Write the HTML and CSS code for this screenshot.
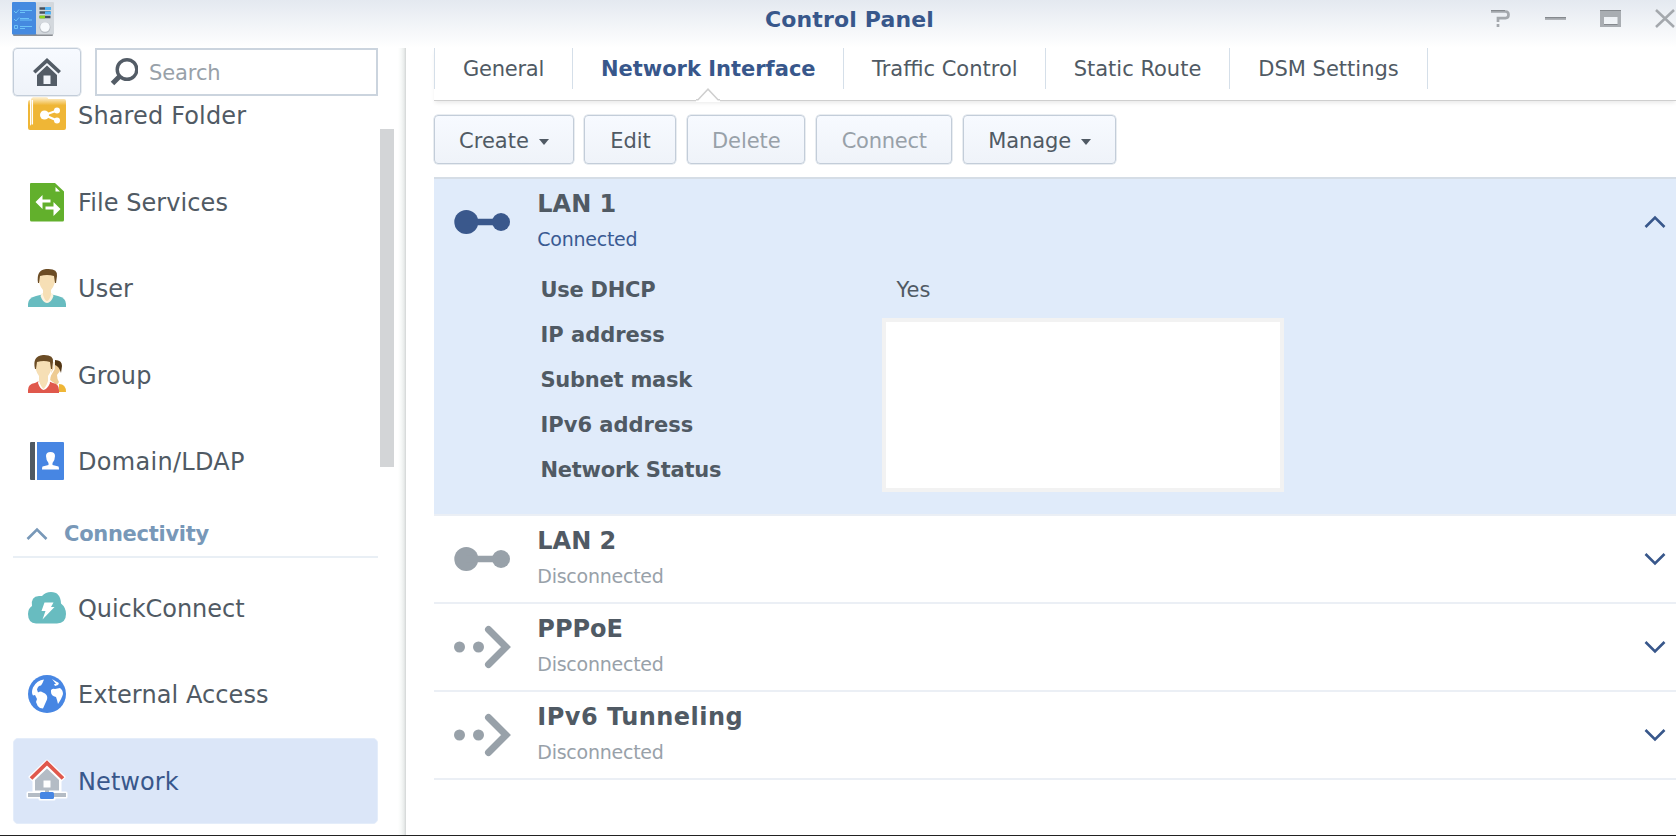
FILE: index.html
```html
<!DOCTYPE html>
<html lang="en">
<head>
<meta charset="utf-8">
<title>Control Panel</title>
<link rel="stylesheet" href="styles.css">
</head>
<body>
<div class="window">
  <header class="titlebar">
    <svg class="app-icon" width="42" height="36" viewBox="0 0 42 36">
      <rect x="1" y="31.500" width="40" height="2.400" rx="1" fill="#8b8e93"/>
      <rect x="0" y="0" width="24" height="32.500" rx="1" fill="#458ae0"/>
      <rect x="24" y="0" width="18" height="32.500" rx="1" fill="#d3d8dd"/>
      <path d="M2 9l2 2 3-3.500M2 17l2 2 3-3.500M2.500 23.500h3v3h-3z" fill="none" stroke="#6cc3f7"/>
      <path d="M8 8.500h12M8 10.500h5M8 16.500h9M8 18h12M8 24.500h12M8 26.500h5" stroke="#6cc3f7"/>
      <path d="M27.500 6.500h11M27.500 10.500h11M27.500 15h11" stroke="#46505c" stroke-width="2.600"/>
      <path d="M33 6.500h6M33 11h6" stroke="#4fb2f5" stroke-width="2.800"/>
      <path d="M27.500 15h5.500" stroke="#8ed61c" stroke-width="2.800"/>
      <circle cx="33" cy="25.500" r="5.500" fill="#b7bcc3"/>
      <circle cx="33" cy="25" r="4.800" fill="#f7fafc"/>
    </svg>
    <h1 class="title">Control Panel</h1>
    <svg class="controls" width="186" height="22" viewBox="0 0 186 22">
      <g fill="none" stroke="#a4a8ad" stroke-width="2.700">
        <path d="M1 3.500h14.500q3 0 3 3.300t-3 3.300h-7.500v3.900"/>
        <path d="M8 16v3"/>
        <path d="M55 10.500h21"/>
        <path d="M166 2l18 17M184 2l-18 17" stroke-width="2.500"/>
      </g>
      <path d="M110 2h21v17h-21zM114 9v7h13.500V9z" fill="#a9adb2" fill-rule="evenodd"/>
      <path d="M1 2.500h14M55 9.500h21M110 2.500h21M114 16.500h13.500" stroke="#85898e"/>
    </svg>
  </header>
  <div class="body">
    <aside class="sidebar">
      <div class="side-top">
        <button class="btn home">
          <svg width="28" height="28" viewBox="0 0 28 28" fill="#535c66">
            <path d="M14 0L0 13l2.500 2.500L14 5l11.500 10.500L28 13z"/>
            <path fill-rule="evenodd" d="M14 7.500L4 17v11h20V17zM10.500 17.500h7V26h-7z"/>
          </svg>
        </button>
        <div class="search">
          <svg width="28" height="28" viewBox="0 0 28 28" fill="none" stroke="#535c66">
            <circle cx="17" cy="11.500" r="9.800" stroke-width="3.400"/>
            <path d="M9.500 18.500L2.500 25.500" stroke-width="5"/>
          </svg>
          <span>Search</span>
        </div>
      </div>
      <div class="list">
        <nav class="items">
          <a class="item first"><svg class="ic" width="42" height="42" viewBox="0 0 42 42">
            <defs><linearGradient id="fade" x1="0" y1="0" x2="0" y2="1"><stop offset="0" stop-color="#fff3d8"/><stop offset=".25" stop-color="#efb636"/></linearGradient></defs>
            <path d="M2 8q0-2 2-2v24q0 1.500 1 1.500V6q0-2 2-3h13q2 0 2 1.500V5h16q2 0 2 2v27q0 2-2 2H4q-2 0-2-2z" fill="url(#fade)"/>
            <path d="M6.300 6v24.500" stroke="#fff" stroke-width="1.500"/>
            <path d="M31 16.500L18.500 21 31 26.500" fill="none" stroke="#fff" stroke-width="2.200"/>
            <circle cx="18.500" cy="21" r="4.500" fill="#fff"/><circle cx="31" cy="16.500" r="3" fill="#fff"/><circle cx="31" cy="26.500" r="3" fill="#fff"/>
          </svg>Shared Folder</a>
          <a class="item"><svg class="ic" width="42" height="42" viewBox="0 0 42 42">
            <path d="M5 2h24l9 8.500V39q0 1.500-1.500 1.500h-31Q4 40.500 4 39V3q0-1 1-1z" fill="#62b02c"/>
            <path d="M29.500 6v4.500H34zM9.500 21l7-7v4.500h8v3h-8V28zM34.500 28l-7-7v4.500h-8v3h8V35z" fill="#fff"/>
          </svg>File Services</a>
          <a class="item"><svg class="ic" width="42" height="42" viewBox="0 0 42 42">
            <path d="M2 40v-3q0-6 8-8l6-1.500h10L32 29q8 2 8 8v3z" fill="#68bcc0"/>
            <path d="M16 26l-1.500 3q2.500 7 6.500 7t6.500-7L26 26z" fill="#fdf3df"/>
            <path d="M12.500 9q0-6 8.500-6t8.500 6q0 9-4.500 14v5q-2 6-4 6t-4-6v-5Q12.500 18 12.500 9z" fill="#f6dfb5"/>
            <path d="M12 16q-2-13 8-14 12-1 11 7l-1 7h-1l-1-7q-7-2-14 0l-1 7z" fill="#6b4c25"/>
          </svg>User</a>
          <a class="item"><svg class="ic" width="42" height="42" viewBox="0 0 42 42">
            <path d="M33 39v-8q7 0 7 8z" fill="#efb636"/>
            <path d="M27 9h8q1 8-4 13 0 4 2 7l-2 3-7-5z" fill="#eecb93"/>
            <path d="M29 7q7 0 7 6l-1 7q-2-7-6-8z" fill="#523614"/>
            <path d="M2 40v-3q0-6 7-7l4-2h9l5 2q6 1 6 7v3z" fill="#e0584c"/>
            <path d="M13 26l-1 4q2 6 5.500 7 4-1 6.500-7l-1-4z" fill="#fff"/>
            <path d="M9 9q0-6 8.500-6T26 9q0 9-4 14v5q-2 6-4.500 8-2.500-2-4.500-8v-5Q9 18 9 9z" fill="#f6dfb5"/>
            <path d="M28 7v9L23.500 24v5" fill="none" stroke="#fff" stroke-width="1.300"/>
            <path d="M9 16Q6 3 17 2q11-.500 10 7l-1 7h-1l-1-7q-6-2-13 0l-1 7z" fill="#6b4c25"/>
          </svg>Group</a>
          <a class="item dom"><svg class="ic" width="42" height="42" viewBox="0 0 42 42">
            <path d="M5 2h4v38H5q-1 0-1-1V3q0-1 1-1z" fill="#4f5a64"/>
            <path d="M11 2h26q1 0 1 1v36q0 1-1 1H11z" fill="#4786e3"/>
            <path d="M20 16q0-4 4.500-4t4.500 4q0 4-2.500 7v2l6 1.500q.500 1 .500 3H16q0-2 .500-3l6-1.500v-2Q20 20 20 16z" fill="#fff"/>
          </svg>Domain/LDAP</a>
          <div class="group"><svg width="22" height="14" viewBox="0 0 22 14"><path d="M1.500 12L11 2.500 20.500 12" fill="none" stroke="#7898b8" stroke-width="2.600"/></svg>Connectivity</div>
          <a class="item quick"><svg class="ic" width="42" height="42" viewBox="0 0 42 42">
            <path d="M10 36.500q-8-.500-8-9.500 0-5.500 4-8Q4.500 9.500 13 9h3q3.500-4 9-4 9.500 0 10 11.500 5 4 5 10.500 0 9-9 9.500z" fill="#68bcc0"/>
            <path d="M18.500 15.500h9L25 20h3.500L16.500 32.500l3-8.500h-4z" fill="#fff"/>
          </svg>QuickConnect</a>
          <a class="item"><svg class="ic" width="42" height="42" viewBox="0 0 42 42">
            <circle cx="21" cy="21" r="19" fill="#4786e3"/>
            <path d="M18 6.500q-7 .500-11 8-2 5 0 8l2-.500 2 4-1 3q1 4 4 6l3 .500 4-9q1-4-2-6l-4-2q-2 0-3 1l-1-3q1-4 4-4 2-3 3-6zM25 17q2-2 4-1l5-1q3 2 3 6-1 4-5 10l-1-4-1-3q-5-1-5-5zM26 6l5 3q3 1 1 3l-3 1-1-2h2z" fill="#fff"/>
          </svg>External Access</a>
          <a class="item active"><svg class="ic" width="42" height="42" viewBox="0 0 42 42">
            <g stroke="#fff" stroke-width="3" stroke-linejoin="round" fill="#fff"><path d="M21 2L4 18l3 3 1-1v12h12v2H2v4h38v-4H22v-2h12V20l1 1 3-3z"/><path d="M14 33h14v7H14z"/></g>
            <path d="M21 9.500L9 21v10.500h24V21z" fill="#b4bcc5"/><path d="M17.500 21.500h7v7h-7z" fill="#fff"/>
            <path d="M5 19.500L21 4l16 15.500" fill="none" stroke="#e0584c" stroke-width="3.800"/>
            <path d="M2 36h38M21 31v4" stroke="#b4bcc5" stroke-width="4"/><rect x="14" y="33" width="14" height="7" rx="1.500" fill="#4786e3"/>
          </svg>Network</a>
        </nav>
        <div class="scrollbar"></div>
      </div>
    </aside>
    <main class="main">
      <nav class="tabs">
        <a class="tab t1">General</a><a class="tab t2 on">Network Interface<svg class="notch" width="24" height="14" viewBox="0 0 24 14"><path d="M0 14V11.800h1.500L12 1l10.500 10.800H24V14z" fill="#fff"/><path d="M0 11.800h2L12 1.200l10 10.600h2" fill="none" stroke="#cfcfcf" stroke-width="1.500"/></svg></a><a class="tab t3">Traffic Control</a><a class="tab t4">Static Route</a><a class="tab t5">DSM Settings</a>
      </nav>
      <div class="toolbar">
        <button class="btn b1">Create<i class="caret"></i></button>
        <button class="btn b2">Edit</button>
        <button class="btn b3 off">Delete</button>
        <button class="btn b4 off">Connect</button>
        <button class="btn b5">Manage<i class="caret"></i></button>
      </div>
      <section class="table">
        <article class="row open">
          <div class="row-head">
            <svg class="link" width="56" height="42" viewBox="0 0 56 42" fill="#3a588c"><circle cx="12.300" cy="21" r="12"/><circle cx="47" cy="21" r="9"/><path d="M12 17.700h35v6.600H12z"/></svg>
            <div class="names"><h2>LAN 1</h2><p class="up">Connected</p></div>
            <svg class="chev" width="22" height="14" viewBox="0 0 22 14"><path d="M1.500 12L11 2.500 20.500 12"/></svg>
          </div>
          <div class="details">
            <dl class="facts"><dt class="tight">Use DHCP</dt><dt>IP address</dt><dt class="tight">Subnet mask</dt><dt>IPv6 address</dt><dt class="tight">Network Status</dt></dl>
            <div class="values"><span>Yes</span><div class="blank"></div></div>
          </div>
        </article>
        <article class="row">
          <div class="row-head">
            <svg class="link" width="56" height="42" viewBox="0 0 56 42" fill="#98a1a9"><circle cx="12.300" cy="21" r="12"/><circle cx="47" cy="21" r="9"/><path d="M12 17.700h35v6.600H12z"/></svg>
            <div class="names"><h2>LAN 2</h2><p>Disconnected</p></div>
            <svg class="chev" width="22" height="14" viewBox="0 0 22 14"><path d="M1.500 2L11 11.500 20.500 2"/></svg>
          </div>
        </article>
        <article class="row">
          <div class="row-head">
            <svg class="link" width="56" height="42" viewBox="0 0 56 42" fill="#98a1a9"><circle cx="5.500" cy="21" r="5.500"/><circle cx="24.500" cy="21" r="5.500"/><path d="M34.500 3.500L52 21 34.500 38.500" fill="none" stroke="#98a1a9" stroke-width="7" stroke-linecap="round"/></svg>
            <div class="names"><h2>PPPoE</h2><p>Disconnected</p></div>
            <svg class="chev" width="22" height="14" viewBox="0 0 22 14"><path d="M1.500 2L11 11.500 20.500 2"/></svg>
          </div>
        </article>
        <article class="row">
          <div class="row-head">
            <svg class="link" width="56" height="42" viewBox="0 0 56 42" fill="#98a1a9"><circle cx="5.500" cy="21" r="5.500"/><circle cx="24.500" cy="21" r="5.500"/><path d="M34.500 3.500L52 21 34.500 38.500" fill="none" stroke="#98a1a9" stroke-width="7" stroke-linecap="round"/></svg>
            <div class="names"><h2 class="wide">IPv6 Tunneling</h2><p>Disconnected</p></div>
            <svg class="chev" width="22" height="14" viewBox="0 0 22 14"><path d="M1.500 2L11 11.500 20.500 2"/></svg>
          </div>
        </article>
      </section>
    </main>
  </div>
</div>
</body>
</html>
```
FILE: styles.css
```css
* { box-sizing: border-box; }
body { margin: 0; font-family: Verdana, "DejaVu Sans", sans-serif; color: #505a64; background: #fff; }
h1, h2, p, dl, dt { margin: 0; }
.window { width: 1676px; height: 836px; overflow: hidden; display: flex; flex-direction: column; border-bottom: 1px solid #222; }
.titlebar { height: 48px; flex: none; display: grid; grid-template-columns: 1fr auto 1fr; background: linear-gradient(#e4e9f0, #fff); }
.app-icon { margin: 2px 0 0 12px; }
.title { font-size: 22px; line-height: 39px; font-weight: bold; letter-spacing: .15px; color: #38578b; margin-left: 23px; }
.controls { justify-self: end; margin: 8px 0 0 0; }
.body { flex: 1; min-height: 0; display: flex; }

.sidebar { width: 405.500px; flex: none; display: flex; flex-direction: column; background: linear-gradient(to left, #d2d5d5 0, #e9eceb 2px, #f7f9f8 5px, #fff 8px); }
.side-top { display: flex; gap: 14px; padding-left: 12.500px; height: 48px; flex: none; }
.btn { font: inherit; font-size: 21px; color: #505a64; height: 49px; padding: 2px 0 0 1px; border: 1.500px solid #c3cdd9; border-radius: 4px; background: linear-gradient(#f7faff, #eff3f9); box-shadow: 0 0 0 .5px #d3dbe4; display: flex; align-items: center; justify-content: center; }
.home { width: 68.500px; height: 48px; padding: 0; }
.search { width: 283px; height: 48px; border: 2px solid #cbd4de; display: flex; align-items: center; padding-left: 13px; gap: 11px; font-size: 21px; color: #98a1a9; background: #fff; }
.search span { padding-top: 1px; letter-spacing: -.1px; }
.list { display: flex; flex: 1; min-height: 0; }
.items { width: 378px; padding-left: 12.500px; margin-right: 2px; }
.item { height: 86.400px; display: flex; align-items: center; padding: 1.500px 0 0 13.500px; gap: 10px; font-size: 24px; letter-spacing: .08px; border-radius: 5px; }
.item.first { margin-top: -23.500px; letter-spacing: .15px; }
.item.dom { letter-spacing: .3px; }
.item.quick { letter-spacing: -.05px; }
.item.active { background: #dbe6f8; color: #38578b; border: 1px solid #e4edfa; padding-left: 12.500px; }
.ic { flex: none; overflow: visible; margin-top: -2.500px; }
.group { height: 53.500px; margin-bottom: 7px; border-bottom: 2px solid #e9eff5; display: flex; align-items: center; padding: 8px 0 0 13px; gap: 16.500px; font-size: 21px; letter-spacing: -.28px; font-weight: bold; color: #7898b8; }
.scrollbar { width: 14px; height: 338px; margin-top: 33px; background: #d3d5d7; }

.main { flex: 1; min-width: 0; padding-left: 28px; display: flex; flex-direction: column; }
.tabs { height: 53px; flex: none; display: flex; border-bottom: 1.500px solid #cfcfcf; box-shadow: 0 3px 4px -1px #eaeaea; font-size: 21px; }
.tab { height: 41px; line-height: 43px; padding-left: 1px; text-align: center; white-space: nowrap; border-right: 1.500px solid #d5dfe9; position: relative; }
.t1 { width: 139px; border-left: 1.500px solid #d5dfe9; letter-spacing: -.25px; }
.t2 { width: 271.500px; }
.t3 { width: 201.500px; }
.t4 { width: 184px; }
.t5 { width: 198px; }
.on { font-weight: bold; color: #38578b; }
.notch { position: absolute; left: 123px; top: 40px; }
.toolbar { display: flex; gap: 10.500px; padding-top: 14px; height: 76px; flex: none; }
.b1 { width: 140px; }
.b2 { width: 92px; }
.b3 { width: 118.500px; letter-spacing: -.1px; }
.b4 { width: 136.500px; letter-spacing: -.25px; }
.b5 { width: 153.500px; letter-spacing: -.1px; }
.off { color: #98a1a9; }
.caret { border: 5.500px solid transparent; border-top: 6px solid #505a64; border-bottom: 0; margin: 2px 0 0 10px; }

.table { border-top: 2px solid #d5dde6; }
.row { border-bottom: 2px solid #ebeff5; }
.row.open { background: #e0ebfa; height: 337px; }
.row-head { height: 86px; display: flex; align-items: center; padding: 0 10px 0 20px; }
.link { flex: none; overflow: visible; }
.names { flex: 1; margin-left: 27.800px; padding-top: 2.500px; }
h2 { font-size: 24px; line-height: 33px; }
.names h2.wide { letter-spacing: .48px; }
.names p { font-size: 19px; line-height: 37px; letter-spacing: -.25px; color: #98a1a9; }
.names p.up { color: #3a5a92; }
.chev { fill: none; stroke: #38578b; stroke-width: 2.600; }
.details { display: flex; font-size: 21px; line-height: 45px; padding: 3px 0 0 107px; }
.facts { width: 341px; font-weight: bold; }
.facts .tight { letter-spacing: -.25px; }
.values span { display: block; margin-left: 15px; height: 50px; }
.blank { width: 402px; height: 174px; background: #fff; border: 4px solid #f2f2f2; }
```
